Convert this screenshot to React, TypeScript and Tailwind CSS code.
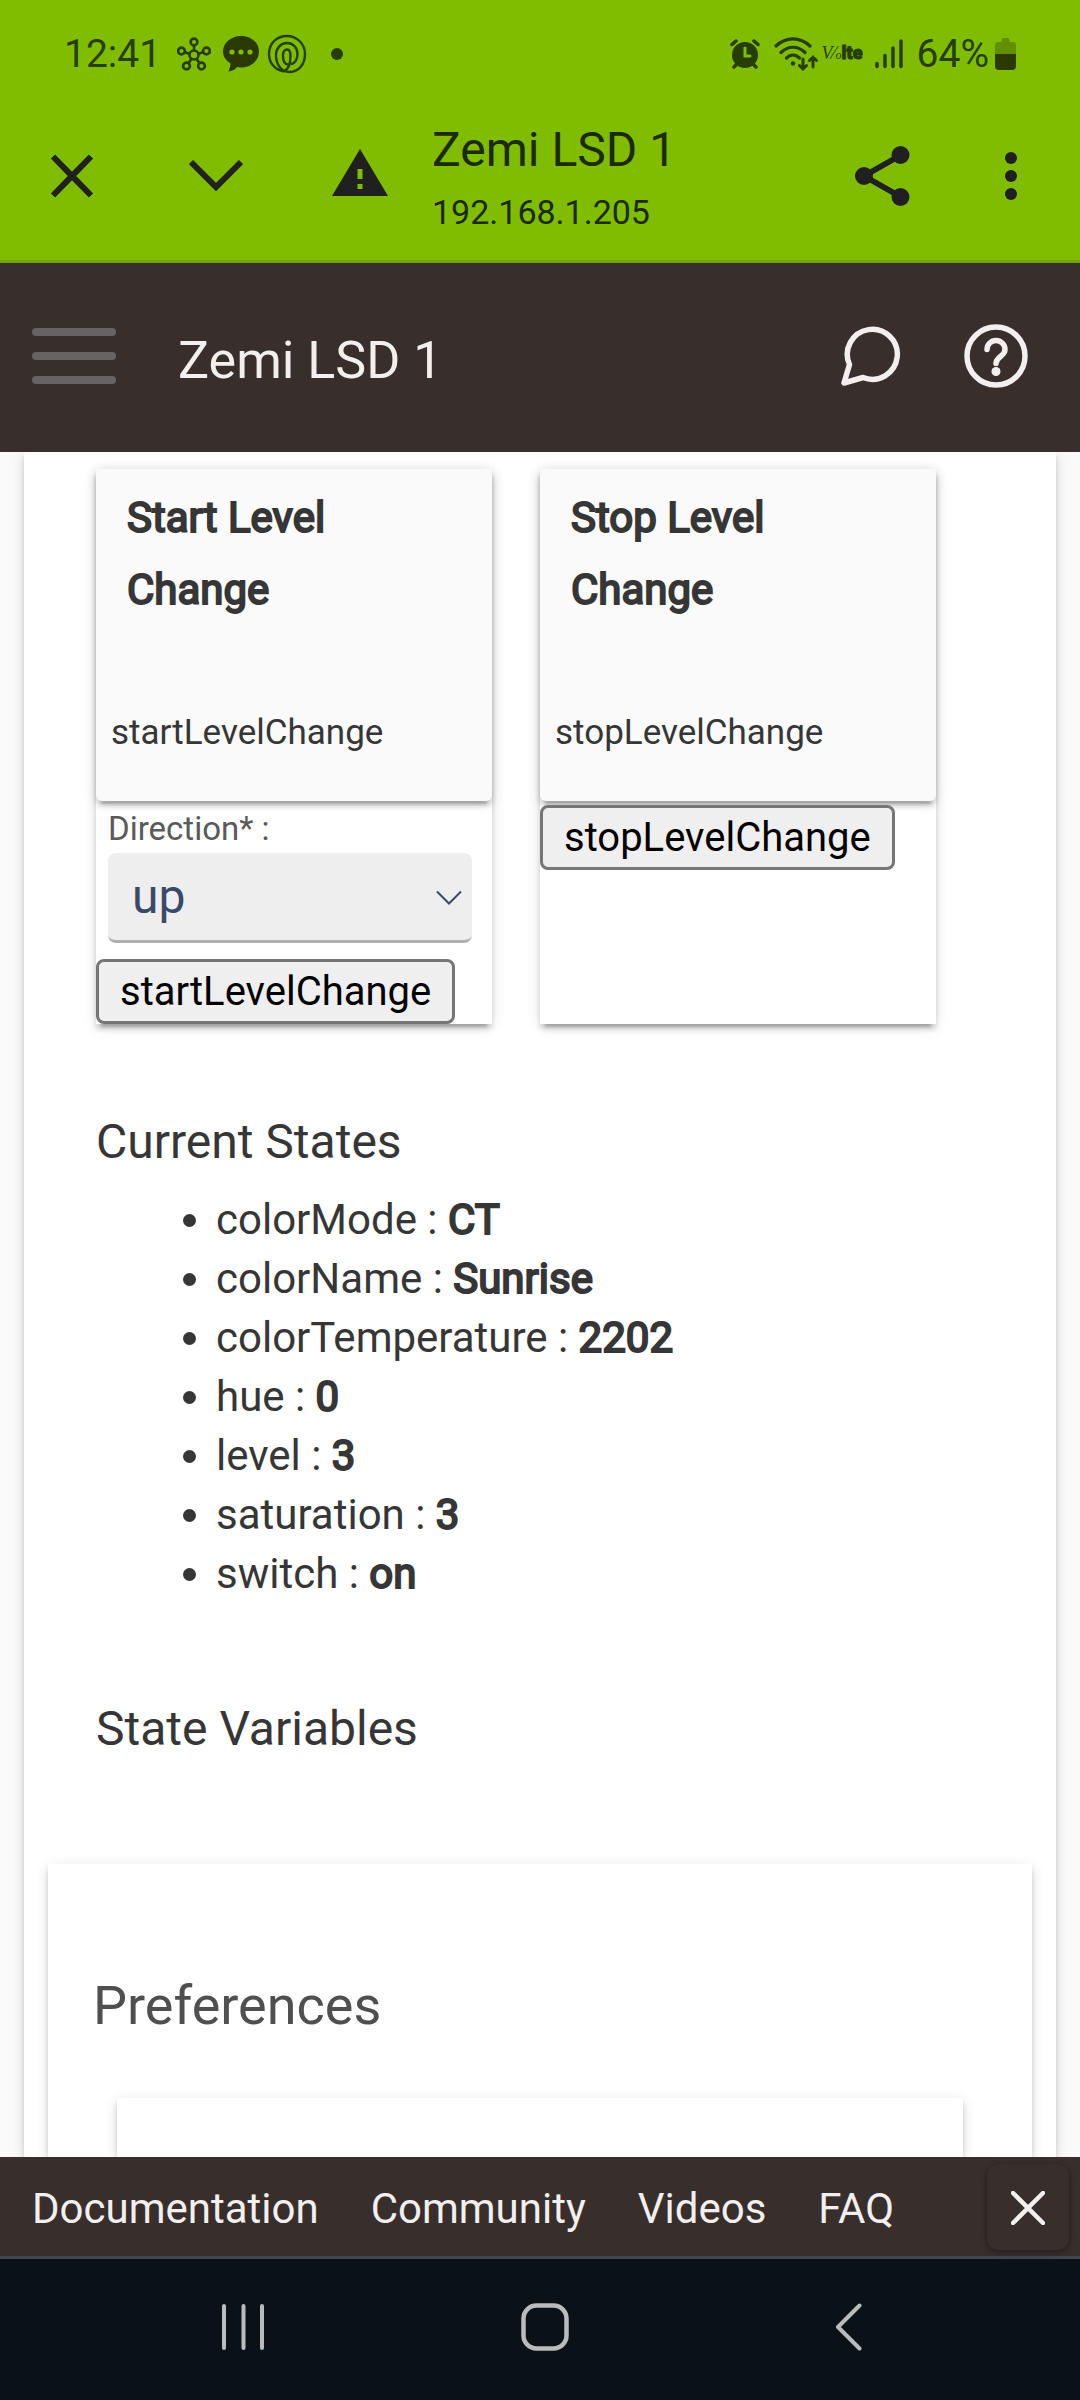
import React from "react";

type DeviceState = { name: string; value: string };

const states: DeviceState[] = [
  { name: "colorMode", value: "CT" },
  { name: "colorName", value: "Sunrise" },
  { name: "colorTemperature", value: "2202" },
  { name: "hue", value: "0" },
  { name: "level", value: "3" },
  { name: "saturation", value: "3" },
  { name: "switch", value: "on" },
];

const footerLinks = ["Documentation", "Community", "Videos", "FAQ"];

const StatusBar: React.FC = () => (
  <div className="flex h-27 items-center justify-between px-16 text-[#263f00]">
    <div className="flex items-center">
      <span className="w-[97px] text-[39px] leading-10">12:41</span>
      <svg className="ml-4" width="34" height="34" viewBox="0 0 34 34" fill="none" stroke="currentColor" strokeWidth="2.6">
        <circle cx="17" cy="18" r="4.5" />
        <circle cx="17" cy="5" r="3.4" />
        <circle cx="4.5" cy="14" r="3.4" />
        <circle cx="29.5" cy="14" r="3.4" />
        <circle cx="9.5" cy="29" r="3.4" />
        <circle cx="24.5" cy="29" r="3.4" />
        <path d="M17 8v6M7.5 15l5.5 2M26.5 15L21 17M11.5 26.5l3-5M22.5 26.5l-3-5" />
      </svg>
      <svg className="ml-3" width="36" height="36" viewBox="0 0 36 36">
        <path d="M18 0C8 0 0 7 0 15.500c0 5 3 9 7.500 12-.3 3-1 5.500-2 8 4-.5 6.500-2 8.500-4.500 1.300.3 2.600.5 4 .5 10 0 18-7 18-16S28 0 18 0z" fill="#2a3900" />
        <g fill="#80bd00">
          <circle cx="9" cy="16" r="2.6" />
          <circle cx="18" cy="16" r="2.6" />
          <circle cx="27" cy="16" r="2.6" />
        </g>
      </svg>
      <svg className="ml-2" width="40" height="40" viewBox="0 0 40 40" fill="none" stroke="currentColor" strokeWidth="2.4">
        <path d="M17 37.500C8 36 2 29 2 20 2 9 10 2 20 2s18 8 18 18-6 18-15.500 18C14 38 9 30 9 21c0-7 5-12 11-12s10.500 4.500 10.500 11c0 5-2.500 10-7 10" />
        <path d="M17 37.500c4-2 6.500-8 6.500-16 0-4-1-6-3.500-6s-4 2.500-4 6c0 5 1.500 9 5 9" />
      </svg>
      <svg className="ml-6" width="12" height="12" viewBox="0 0 12 12">
        <circle cx="6" cy="6" r="6" fill="currentColor" />
      </svg>
    </div>
    <div className="flex items-center">
      <svg width="30" height="30" viewBox="0 0 30 30" fill="none" stroke="currentColor" strokeLinecap="round">
        <circle cx="15" cy="16" r="13" fill="currentColor" stroke="none" />
        <path d="M2 5.5L6 2M28 5.500L24 2M4 28l3-3M26 28l-3-3" strokeWidth="3.5" />
        <path d="M15 9v8h5" stroke="#80bd00" strokeWidth="3" />
      </svg>
      <svg className="ml-[14px]" width="44" height="34" viewBox="0 0 44 34" fill="none" stroke="currentColor" strokeWidth="3.2" strokeLinecap="round">
        <path d="M2 9C12-.5 26-.5 36 9M7 15.500c7-7 17-7 24 0M12.500 21c4-4 9-4 13 0" />
        <circle cx="19" cy="26.5" r="2.2" fill="currentColor" stroke="none" />
        <path d="M29 22v10M25.500 28.500L29 32l3.500-3.500M39 30V20M35.500 23.500L39 20l3.500 3.500" strokeWidth="3" />
      </svg>
      <span className="ml-1 flex w-[45px] items-baseline leading-6">
        <span className="font-['Liberation_Serif',serif] text-[18px] italic">V⁄</span>
        <span className="font-['Liberation_Serif',serif] text-[12px] italic">o</span>
        <span className="text-[18px] font-black [-webkit-text-stroke:1px]">lte</span>
      </span>
      <svg className="ml-2" width="28" height="30" viewBox="0 0 28 30" stroke="currentColor" strokeWidth="3.5" strokeLinecap="round">
        <path d="M2 24.500v3M10 16.500v11M18 9v18.500M26 2v25.500" />
      </svg>
      <span className="ml-[14px] text-[39px] leading-10">64%</span>
      <svg className="ml-[6px]" width="21" height="32" viewBox="0 0 21 32">
        <path d="M6.5 2a2 2 0 0 1 2-2h4a2 2 0 0 1 2 2v2H18a3 3 0 0 1 3 3v9H0V7a3 3 0 0 1 3-3h3.500z" fill="#619000" />
        <path d="M0 16h21v12a4 4 0 0 1-4 4H4a4 4 0 0 1-4-4z" fill="#2a3900" />
      </svg>
    </div>
  </div>
);

const BrowserBar: React.FC = () => (
  <div className="flex h-[152px] items-start pr-[63px] pl-[51px] text-[#202020]">
    <button aria-label="Close tab" className="mt-[46px]">
      <svg width="42" height="44" viewBox="0 0 42 44" stroke="currentColor" strokeWidth="6">
        <path d="M2 2.500l38 39M40 2.500l-38 39" />
      </svg>
    </button>
    <button aria-label="Minimise" className="mt-[51px] ml-24">
      <svg width="54" height="34" viewBox="0 0 54 34" fill="none" stroke="currentColor" strokeWidth="6">
        <path d="M2 3l25 25L52 3" />
      </svg>
    </button>
    <button aria-label="Connection is not secure" className="mt-[41px] ml-[89px]">
      <svg width="56" height="47" viewBox="0 0 56 47">
        <path d="M28 0l28 47H0z" fill="currentColor" />
        <path d="M25.5 20h5v10h-5zM25.500 35h5v5h-5z" fill="#80bd00" />
      </svg>
    </button>
    <div className="ml-11 flex-1 text-[#1b2a00]">
      <div className="pt-[14px] text-[48px] leading-14">Zemi LSD 1</div>
      <div className="pt-[14px] text-[34px] leading-10">192.168.1.205</div>
    </div>
    <button aria-label="Share" className="mt-[38px]">
      <svg width="55" height="60" viewBox="0 0 55 60" fill="currentColor">
        <path d="M9 30L46 9M9 30l37 21" stroke="currentColor" strokeWidth="5.5" />
        <circle cx="9" cy="30" r="9" />
        <circle cx="45.5" cy="9" r="9" />
        <circle cx="45.5" cy="51" r="9" />
      </svg>
    </button>
    <button aria-label="More options" className="mt-11 ml-[95px]">
      <svg width="12" height="48" viewBox="0 0 12 48" fill="currentColor">
        <circle cx="6" cy="6" r="6" />
        <circle cx="6" cy="24" r="6" />
        <circle cx="6" cy="42" r="6" />
      </svg>
    </button>
  </div>
);

const AppHeader: React.FC = () => (
  <header className="flex h-[189px] items-center bg-[#382e2c] pr-[52px] pb-1 pl-8 text-[#f3efee]">
    <button aria-label="Menu" className="flex flex-col gap-4">
      <span className="h-2 w-21 rounded-full bg-[#656363]" />
      <span className="h-2 w-21 rounded-full bg-[#656363]" />
      <span className="h-2 w-21 rounded-full bg-[#656363]" />
    </button>
    <h1 className="ml-[62px] flex-1 pt-[10px] text-[52px] leading-16">Zemi LSD 1</h1>
    <button aria-label="Messages">
      <svg width="60" height="60" viewBox="0 0 60 60" fill="none" stroke="currentColor" strokeWidth="5.5" strokeLinejoin="round">
        <path d="M8.5 38.500A25 25 0 1 1 22 51.500L3 57z" />
      </svg>
    </button>
    <button aria-label="Help" className="ml-[63px]">
      <svg width="64" height="64" viewBox="0 0 64 64" fill="none" stroke="currentColor" strokeWidth="5.5" strokeLinecap="round">
        <circle cx="32" cy="32" r="29" />
        <path d="M23 25.500c0-5 4-9 9-9s9 4 9 9c0 7-9 7-9 14" />
        <circle cx="32" cy="47.5" r="4.5" fill="currentColor" stroke="none" />
      </svg>
    </button>
  </header>
);

const CommandCard: React.FC<{ title: string; command: string; children?: React.ReactNode }> = ({
  title,
  command,
  children,
}) => (
  <form
    className="flex w-[396px] flex-col bg-white shadow-[0_8px_3px_-5px_rgba(0,0,0,0.2),0_5px_5px_rgba(0,0,0,0.14),0_3px_13px_rgba(0,0,0,0.12)]"
    onSubmit={(e) => e.preventDefault()}
  >
    <div className="rounded-md bg-[#fafafa] px-[15px] pt-[13px] pb-12 shadow-[0_8px_3px_-5px_rgba(0,0,0,0.2),0_5px_5px_rgba(0,0,0,0.14),0_3px_13px_rgba(0,0,0,0.12)]">
      <h3 className="w-64 pl-4 text-[42px] leading-18 [-webkit-text-stroke:2px]">{title}</h3>
      <p className="mt-[87px] text-[35px] leading-10">{command}</p>
    </div>
    {children}
    <button
      type="submit"
      className={`${children ? "mt-4" : "mt-1"} self-start rounded-lg border-[3px] border-[#767676] bg-[#efefef] px-[21px] text-[40px] leading-[59px] text-black`}
    >
      {command}
    </button>
  </form>
);

const App: React.FC = () => {
  const [direction, setDirection] = React.useState("up");

  return (
    <div className="flex min-h-screen w-full flex-col bg-[#fafafa] font-['Roboto',sans-serif] text-[#363636]">
      <div className="border-b-[3px] border-[#73a40d] bg-[#80bd00]">
        <StatusBar />
        <BrowserBar />
      </div>
      <AppHeader />

      <main className="flex flex-1 flex-col overflow-hidden px-6">
        <div className="flex flex-1 flex-col bg-white px-6 pt-[17px] shadow-[0_5px_5px_rgba(0,0,0,0.14),0_3px_13px_rgba(0,0,0,0.12)]">
          {/* Commands */}
          <div className="flex gap-12 px-12">
            <CommandCard title="Start Level Change" command="startLevelChange">
              <div className="flex flex-col px-3 pt-2">
                <label htmlFor="direction" className="text-[33px] leading-10 text-[#5a5a5a]">
                  Direction* :
                </label>
                <div className="relative mt-1 mr-2">
                  <select
                    id="direction"
                    value={direction}
                    onChange={(e) => setDirection(e.target.value)}
                    className="h-[90px] w-full appearance-none rounded-lg border-b-[3px] border-[#b0b0b0] bg-[#eee] px-6 text-[48px] leading-14 text-[#3a4968]"
                  >
                    <option value="up">up</option>
                    <option value="down">down</option>
                  </select>
                  <svg
                    className="pointer-events-none absolute top-[37px] right-[10px]"
                    width="26"
                    height="16"
                    viewBox="0 0 26 16"
                    fill="none"
                    stroke="#3a4968"
                    strokeWidth="2"
                  >
                    <path d="M1 1.500l12 12 12-12" />
                  </svg>
                </div>
              </div>
            </CommandCard>
            <CommandCard title="Stop Level Change" command="stopLevelChange" />
          </div>

          {/* Current states */}
          <section className="mt-[90px] px-12">
            <h2 className="text-[48px] leading-14">Current States</h2>
            <ul className="mt-5 list-disc pl-30 text-[42px] leading-[59px]">
              {states.map((s) => (
                <li key={s.name}>
                  {s.name} : <strong className="font-normal [-webkit-text-stroke:2px]">{s.value}</strong>
                </li>
              ))}
            </ul>
          </section>

          <section className="mt-[98px] px-12">
            <h2 className="text-[48px] leading-14">State Variables</h2>
          </section>

          {/* Preferences */}
          <section className="mt-[107px] flex flex-1 flex-col px-[69px] pt-[110px] shadow-[0_5px_5px_rgba(0,0,0,0.14),0_3px_13px_rgba(0,0,0,0.12)]">
            <h2 className="-ml-6 text-[54px] leading-16 text-[#4f4f4f]">Preferences</h2>
            <div className="mt-15 min-h-14 flex-1 shadow-[0_5px_5px_rgba(0,0,0,0.14),0_3px_13px_rgba(0,0,0,0.12)]" />
          </section>
        </div>
      </main>

      <footer className="relative">
        <nav className="flex h-[102px] items-center border-b-[3px] border-[#41474d] bg-[#382e2c] pr-[11px] pl-8 text-[42px] text-[#f3efee]">
          <div className="flex flex-1 gap-[52px] pt-1">
            {footerLinks.map((label) => (
              <a key={label} href="#" className="leading-14">
                {label}
              </a>
            ))}
          </div>
          <button
            aria-label="Close"
            className="flex h-[86px] w-[82px] items-center justify-center rounded-xl pt-[2px] shadow-[0_2px_6px_rgba(0,0,0,0.4)]"
          >
            <svg width="34" height="34" viewBox="0 0 34 34" stroke="currentColor" strokeWidth="4.5" strokeLinecap="round">
              <path d="M2 2l30 30M32 2L2 32" />
            </svg>
          </button>
        </nav>
        <div className="flex h-[141px] items-center bg-[#0a1217] pr-[218px] pb-[5px] pl-[222px] text-[#b9bbbc]">
          <button aria-label="Recent apps">
            <svg width="43" height="48" viewBox="0 0 43 48" stroke="currentColor" strokeWidth="4" strokeLinecap="round">
              <path d="M2 3v42M21.500 3v42M40 3v42" />
            </svg>
          </button>
          <button aria-label="Home" className="ml-64">
            <svg width="48" height="48" viewBox="0 0 48 48" fill="none" stroke="currentColor" strokeWidth="4.5">
              <rect x="2.5" y="2.5" width="43" height="43" rx="13" />
            </svg>
          </button>
          <button aria-label="Back" className="ml-auto">
            <svg width="27" height="48" viewBox="0 0 27 48" fill="none" stroke="currentColor" strokeWidth="4" strokeLinecap="round" strokeLinejoin="round">
              <path d="M24.500 2.500L3 24l21.500 21.500" />
            </svg>
          </button>
        </div>
      </footer>
    </div>
  );
};

export default App;
